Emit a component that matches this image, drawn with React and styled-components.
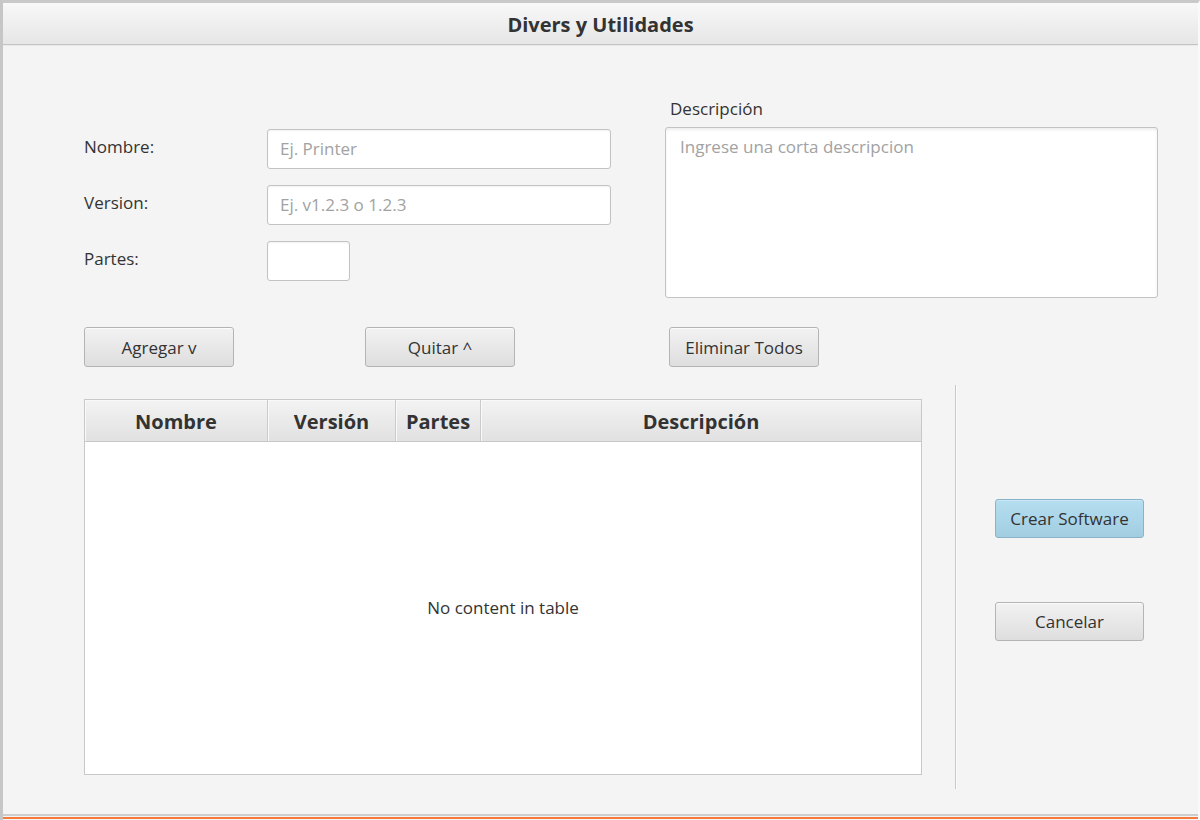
import React from "react";
import styled, { createGlobalStyle } from "styled-components";

const Global = createGlobalStyle`
  html, body { margin: 0; padding: 0; background: #f4f4f4; }
  body { font-family: "Open Sans", "Noto Sans", sans-serif; color: #333; }
  * { box-sizing: border-box; }
`;

const Window = styled.div`
  width: 1200px;
  height: 820px;
  display: flex;
  flex-direction: column;
  background: #f4f4f4;
  border-top: 3px solid #c9c9c9;
  border-left: 3px solid #c6c6c6;
  border-right: 2px solid #fafafa;
  overflow: hidden;
`;

const TitleBar = styled.div`
  height: 42px;
  flex: none;
  display: flex;
  align-items: center;
  justify-content: center;
  background: linear-gradient(#f8f8f8, #e6e6e6);
  border-bottom: 1px solid #c4c4c4;
  box-shadow: 0 1px 0 #e9e9e9;
  font-weight: 700;
  font-size: 20px;
  color: #333;
  padding-top: 1px;
`;

const Body = styled.div`
  flex: 1;
  padding-left: 81px;
  display: flex;
  flex-direction: column;
`;

const TopSection = styled.div`
  display: flex;
  align-items: flex-start;
`;

const FormGrid = styled.div`
  padding-top: 84px;
  width: 527px;
  display: grid;
  grid-template-columns: 183px 1fr;
  row-gap: 16px;
  align-items: center;
`;

const Label = styled.label`
  font-size: 17px;
  color: #333;
  line-height: 20px;
  margin-top: -4px;
`;

const Field = styled.div`
  height: 40px;
  width: ${(p) => p.$w || "100%"};
  background: #fff;
  border: 1px solid #c3c3c3;
  border-radius: 3px;
  box-shadow: inset 0 1px 2px rgba(0, 0, 0, 0.06);
  display: flex;
  align-items: center;
  padding: 0 12px 1px;
  font-size: 17px;
  color: #a2a2a2;
`;

const DescCol = styled.div`
  padding-top: 54px;
  margin-left: 54px;
  width: 493px;
  display: flex;
  flex-direction: column;
`;

const DescLabel = styled.div`
  font-size: 17px;
  line-height: 20px;
  padding-left: 5px;
  margin-bottom: 8px;
`;

const TextArea = styled.div`
  height: 171px;
  background: #fff;
  border: 1px solid #c3c3c3;
  border-radius: 3px;
  box-shadow: inset 0 2px 3px rgba(0, 0, 0, 0.07);
  padding: 8px 14px;
  font-size: 17px;
  color: #a2a2a2;
  line-height: 22px;
`;

const ButtonRow = styled.div`
  margin-top: 29px;
  display: grid;
  grid-template-columns: 281px 304px auto;
  justify-items: start;
`;

const Button = styled.button`
  width: 150px;
  height: 40px;
  border-radius: 3px;
  font-family: inherit;
  font-size: 17px;
  color: #333;
  padding: 0;
  cursor: default;
  border: 1px solid ${(p) => (p.$primary ? "#88b3c8" : "#b4b4b4")};
  background: ${(p) =>
    p.$primary
      ? "linear-gradient(#b5def0, #a2cde1)"
      : "linear-gradient(#f2f2f2, #dedede)"};
  box-shadow: inset 0 1px 0 ${(p) => (p.$primary ? "#c9e8f6" : "#fbfbfb")};
`;

const BottomSection = styled.div`
  margin-top: 18px;
  height: 404px;
  display: flex;
`;

const TableWrap = styled.div`
  padding-top: 14px;
  width: 838px;
  height: 390px;
`;

const Table = styled.div`
  height: 376px;
  background: #fff;
  border: 1px solid #c8c8c8;
  display: flex;
  flex-direction: column;
`;

const HeaderRow = styled.div`
  height: 42px;
  flex: none;
  display: grid;
  grid-template-columns: 183px 128px 85px 1fr;
  background: linear-gradient(#f3f3f3, #e1e1e1);
  border-bottom: 1px solid #c8c8c8;
`;

const HeaderCell = styled.div`
  display: flex;
  align-items: center;
  justify-content: center;
  font-weight: 700;
  font-size: 20px;
  color: #333;
  border-right: 1px solid #cbcbcb;
  box-shadow: inset 1px 1px 0 #f9f9f9;
  padding-top: 1px;
  &:last-child { border-right: none; }
`;

const EmptyBody = styled.div`
  flex: 1;
  display: flex;
  align-items: center;
  justify-content: center;
  font-size: 17px;
  color: #333;
  padding-bottom: 2px;
`;

const Separator = styled.div`
  width: 1px;
  margin-left: 33px;
  background: #c9c9c9;
  box-shadow: 1px 0 0 #fbfbfb;
`;

const SideCol = styled.div`
  margin-left: 39px;
  padding-top: 114px;
  display: flex;
  flex-direction: column;
  gap: 64px;
`;

const SideButton = styled(Button)`
  width: 149px;
  height: 39px;
`;

const Footer = styled.div`
  flex: none;
  height: 6px;
  margin-left: -3px;
  border-top: 2px solid #cdcdcd;
  background: #f4f4f4;
  position: relative;
  &::after {
    content: "";
    position: absolute;
    left: 0;
    right: 0;
    top: 1px;
    height: 2px;
    background: #f5793a;
  }
`;

export default function App() {
  return (
    <>
      <Global />
      <Window>
        <TitleBar>Divers y Utilidades</TitleBar>
        <Body>
          <TopSection>
            <FormGrid>
              <Label>Nombre:</Label>
              <Field>Ej. Printer</Field>
              <Label>Version:</Label>
              <Field>Ej. v1.2.3 o 1.2.3</Field>
              <Label>Partes:</Label>
              <Field $w="83px" />
            </FormGrid>
            <DescCol>
              <DescLabel>Descripción</DescLabel>
              <TextArea>Ingrese una corta descripcion</TextArea>
            </DescCol>
          </TopSection>
          <ButtonRow>
            <Button>Agregar v</Button>
            <Button>Quitar ^</Button>
            <Button>Eliminar Todos</Button>
          </ButtonRow>
          <BottomSection>
            <TableWrap>
              <Table>
                <HeaderRow>
                  <HeaderCell>Nombre</HeaderCell>
                  <HeaderCell>Versión</HeaderCell>
                  <HeaderCell>Partes</HeaderCell>
                  <HeaderCell>Descripción</HeaderCell>
                </HeaderRow>
                <EmptyBody>No content in table</EmptyBody>
              </Table>
            </TableWrap>
            <Separator />
            <SideCol>
              <SideButton $primary>Crear Software</SideButton>
              <SideButton>Cancelar</SideButton>
            </SideCol>
          </BottomSection>
        </Body>
        <Footer />
      </Window>
    </>
  );
}
